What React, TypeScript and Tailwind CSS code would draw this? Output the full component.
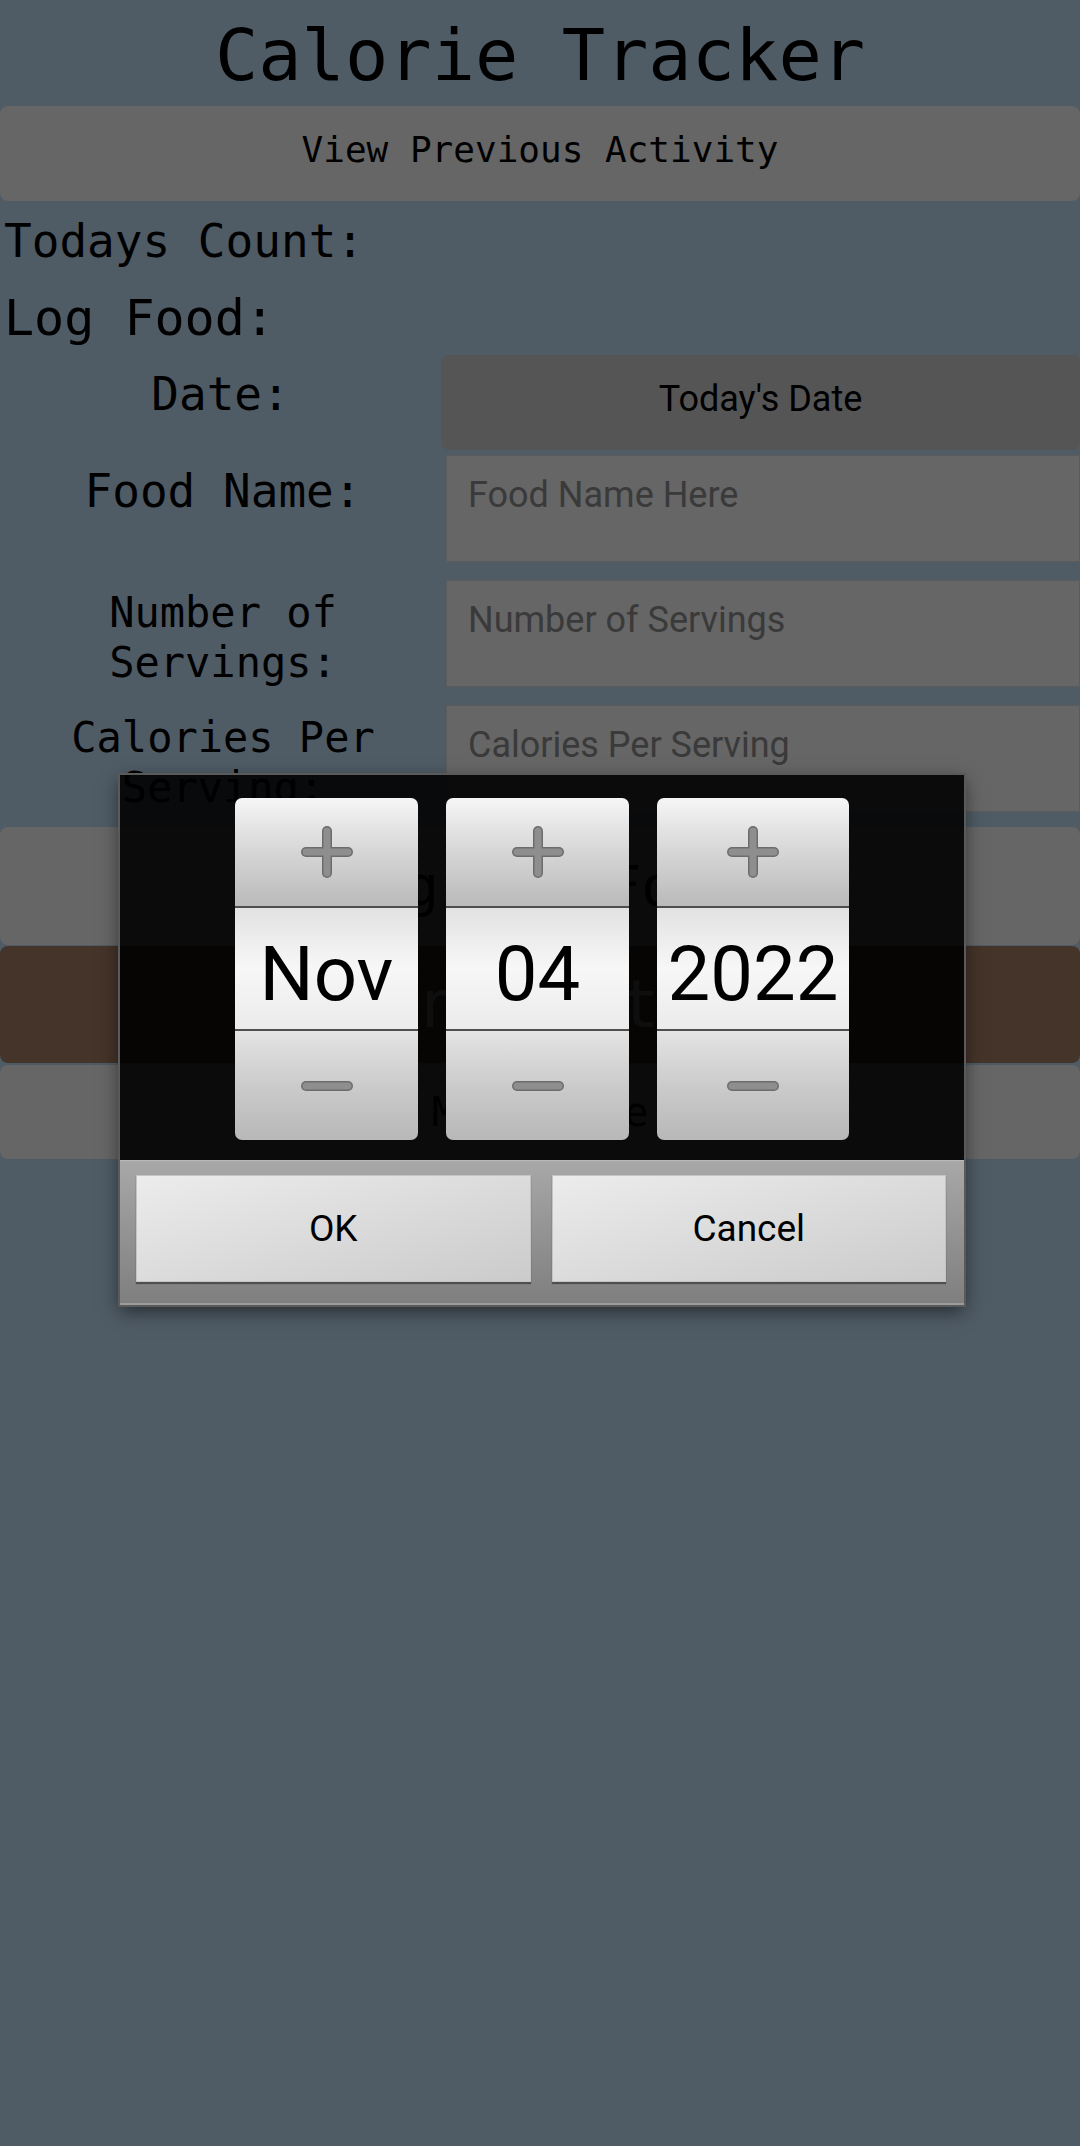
import React from "react";

function PlusIcon() {
  return (
    <svg width="52" height="52" viewBox="0 0 52 52">
      <g strokeLinecap="round">
        <line x1="5" y1="26" x2="47" y2="26" stroke="#6c6c6c" strokeWidth="10" />
        <line x1="26" y1="5" x2="26" y2="47" stroke="#6c6c6c" strokeWidth="10" />
        <line x1="5" y1="26" x2="47" y2="26" stroke="#8e8e8e" strokeWidth="7" />
        <line x1="26" y1="5" x2="26" y2="47" stroke="#8e8e8e" strokeWidth="7" />
      </g>
    </svg>
  );
}

function MinusIcon() {
  return (
    <svg width="52" height="14" viewBox="0 0 52 14">
      <g strokeLinecap="round">
        <line x1="5" y1="7" x2="47" y2="7" stroke="#6c6c6c" strokeWidth="10" />
        <line x1="5" y1="7" x2="47" y2="7" stroke="#8e8e8e" strokeWidth="7" />
      </g>
    </svg>
  );
}

function Spinner({ value, width }: { value: string; width: string }) {
  return (
    <div className={`flex flex-col ${width}`}>
      <div className="flex h-[108px] items-center justify-center rounded-t-[7px] bg-linear-to-b from-[#f6f6f6] via-[#d6d6d6] to-[#bababa]">
        <PlusIcon />
      </div>
      <div className="h-[2px] bg-[#4e4e4e]" />
      <div className="flex h-[121px] items-center justify-center bg-linear-to-b from-[#e2e2e2] via-[#f7f7f7] to-[#ebebeb] pt-[11px] font-['Roboto',sans-serif] text-[76px] leading-[76px] text-black">
        {value}
      </div>
      <div className="h-[2px] bg-[#4e4e4e]" />
      <div className="flex h-[109px] items-center justify-center rounded-b-[7px] bg-linear-to-b from-[#e4e4e4] via-[#cbcbcb] to-[#b8b8b8]">
        <MinusIcon />
      </div>
    </div>
  );
}

const fields = [
  {
    label: ["Food Name:"],
    placeholder: "Food Name Here",
    labelClass: "pt-[9px] text-[46px] leading-[54px]",
    gap: "mt-[5px]",
  },
  {
    label: ["Number of", "Servings:"],
    placeholder: "Number of Servings",
    labelClass: "pt-[8px] text-[42px] leading-[50px]",
    gap: "mt-[18px]",
  },
  {
    label: ["Calories Per", "Serving:"],
    placeholder: "Calories Per Serving",
    labelClass: "pt-[8px] text-[42px] leading-[50px]",
    gap: "mt-[18px]",
  },
];

export default function App() {
  return (
    <div className="relative min-h-screen bg-[#9eb6ca] font-['DejaVu_Sans_Mono',monospace] text-black">
      <h1 className="pt-[12px] pb-[8px] text-center text-[72px] font-normal leading-[86px]">
        Calorie Tracker
      </h1>
      <button className="flex h-[95px] w-full items-center justify-center rounded-[8px] bg-[#cccccc] pb-[7px] text-[36px]">
        View Previous Activity
      </button>

      <p className="mt-[13px] pl-[4px] text-[46px] leading-[54px]">Todays Count:</p>
      <p className="mt-[21px] pl-[4px] text-[50px] leading-[58px]">Log Food:</p>

      <div className="mt-[8px] flex h-[95px]">
        <div className="w-[441px] pt-[12px] text-center text-[46px] leading-[54px]">Date:</div>
        <button className="flex-1 rounded-[8px] bg-[#aaaaaa] pb-[8px] font-['Roboto',sans-serif] text-[36px]">
          Today's Date
        </button>
      </div>

      {fields.map((f) => (
        <div key={f.placeholder} className={`${f.gap} flex h-[107px]`}>
          <div className={`w-[446px] text-center ${f.labelClass}`}>
            {f.label.map((line) => (
              <div key={line}>{line}</div>
            ))}
          </div>
          <input
            placeholder={f.placeholder}
            className="h-full min-w-0 flex-1 border border-[#b6b6b6] bg-[#cccccc] pt-[18px] pb-[45px] pl-[21px] font-['Roboto',sans-serif] text-[36px] leading-[42px] outline-none placeholder:text-[#747474]"
          />
        </div>
      ))}

      <div className="mt-[15px] flex flex-col">
        <button className="h-[118px] rounded-[8px] bg-[#cccccc] text-[56px]">Log New Food</button>
        <button className="mt-[1px] h-[117px] rounded-[8px] bg-[#886854] text-[66px] text-white">
          Find Total
        </button>
        <button className="mt-[2px] h-[94px] rounded-[8px] bg-[#cccccc] text-[40px]">Main Page</button>
      </div>

      {/* dim layer + date picker dialog */}
      <div className="absolute inset-0 bg-black/50">
        <div className="mt-[775px] ml-[120px] w-[844px] shadow-[0_0_0_2px_#5a5a5a,0_6px_18px_rgba(0,0,0,0.55)]">
          <div className="flex justify-center gap-[28px] bg-black/[0.89] pt-[23px] pb-[20px]">
            <Spinner value="Nov" width="w-[183px]" />
            <Spinner value="04" width="w-[183px]" />
            <Spinner value="2022" width="w-[192px]" />
          </div>
          <div className="flex h-[145px] gap-[21px] border-t border-[#b9b9b9] border-b-2 border-b-[#9c9c9c] bg-linear-to-b from-[#a8a8a8] to-[#7f7f7f] pt-[14px] pr-[18px] pl-[16px] font-['Roboto',sans-serif] text-[37px]">
            <button className="h-[107px] flex-1 border border-[#c4c4c4] bg-linear-to-br from-[#ececec] to-[#cbcbcb] shadow-[0_2px_1px_rgba(0,0,0,0.4)]">
              OK
            </button>
            <button className="h-[107px] flex-1 border border-[#c4c4c4] bg-linear-to-br from-[#ececec] to-[#cbcbcb] shadow-[0_2px_1px_rgba(0,0,0,0.4)]">
              Cancel
            </button>
          </div>
        </div>
      </div>
    </div>
  );
}
